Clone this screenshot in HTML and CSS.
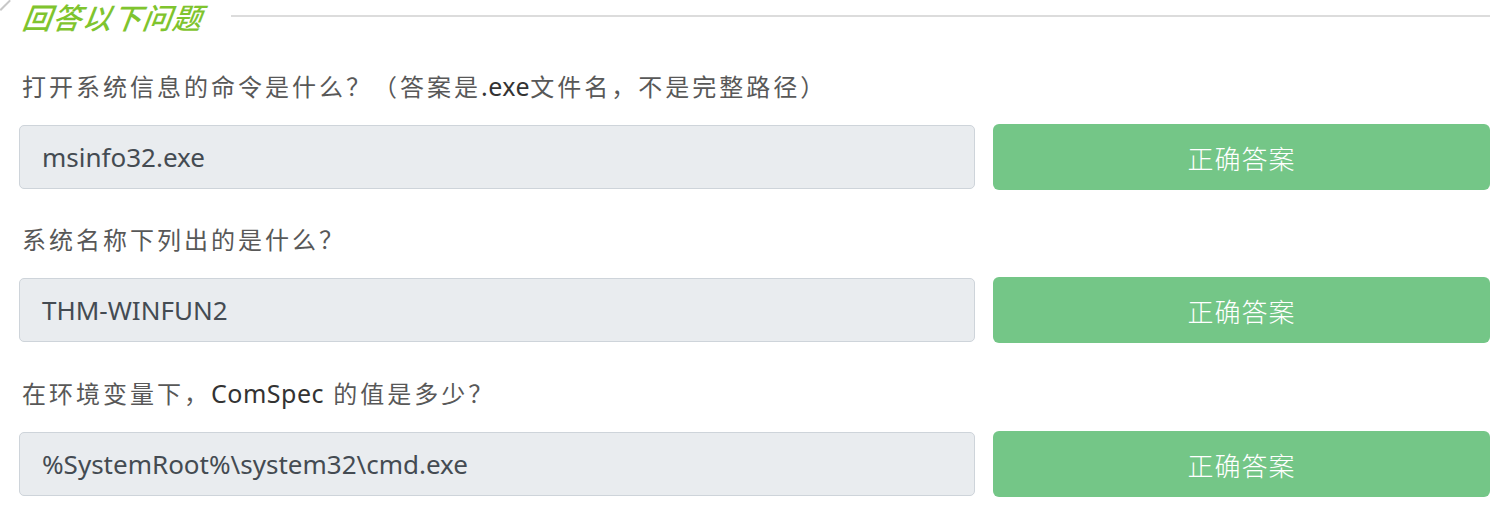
FILE: index.html
```html
<!DOCTYPE html>
<html lang="zh">
<head>
<meta charset="utf-8">
<link rel="stylesheet" href="styles.css">
</head>
<body>
<div class="page">
  <span class="corner"></span>
  <div class="title-row">
    <h2 class="title">回答以下问题</h2>
    <div class="rule"></div>
  </div>
  <div class="qa">
    <p class="question">打开系统信息的命令是什么？（答案是<span class="lat">.exe</span>文件名，不是完整路径）</p>
    <div class="answer-row">
      <div class="answer">msinfo32.exe</div>
      <button class="btn">正确答案</button>
    </div>
  </div>
  <div class="qa">
    <p class="question">系统名称下列出的是什么？</p>
    <div class="answer-row">
      <div class="answer">THM-WINFUN2</div>
      <button class="btn">正确答案</button>
    </div>
  </div>
  <div class="qa">
    <p class="question">在环境变量下，<span class="lat">ComSpec</span> 的值是多少？</p>
    <div class="answer-row">
      <div class="answer">%SystemRoot%\system32\cmd.exe</div>
      <button class="btn">正确答案</button>
    </div>
  </div>
</div>
</body>
</html>
```
FILE: styles.css
```css
* { box-sizing: border-box; }
html, body { margin: 0; padding: 0; background: #fff; }
body {
  font-family: "Noto Sans", "Noto Sans CJK SC", sans-serif;
  color: #555;
}
.page {
  position: relative;
  padding: 0 7px 0 19px;
  width: 1497px;
}
.corner {
  position: absolute;
  left: -6px;
  top: -6px;
  width: 14px;
  height: 14px;
  border-right: 2px solid #c8c8c8;
  transform: rotate(45deg);
}
.title-row {
  display: flex;
  align-items: center;
  height: 31px;
  padding-top: 1px;
  gap: 28px;
}
.title {
  margin: 0 0 0 4px;
  font-size: 29px;
  font-weight: 500;
  font-style: italic;
  color: #7fc42e;
  line-height: 30px;
  letter-spacing: 1px;
  font-family: "Noto Sans CJK SC", sans-serif;
  transform: skewX(-8deg);
  white-space: nowrap;
}
.rule {
  flex: 1;
  height: 2px;
  background: #dcdcdc;
}
.qa { margin-top: 37px; }
.qa + .qa { margin-top: 32px; }
.question {
  margin: 0 0 19px 3px;
  font-size: 24px;
  line-height: 36px;
  letter-spacing: 3px;
  color: #585858;
}
.lat { color: #333; letter-spacing: 0.5px; font-size: 25px; }
.answer-row {
  display: flex;
  align-items: center;
  gap: 18px;
}
.answer {
  width: 956px;
  height: 64px;
  display: flex;
  align-items: center;
  padding-left: 22px;
  background: #e9ecef;
  border: 1px solid #ced4da;
  border-radius: 5px;
  font-size: 26px;
  color: #444b52;
}
.btn {
  width: 497px;
  height: 66px;
  border: none;
  border-radius: 6px;
  background: #74c687;
  color: #fff;
  font-family: "Noto Sans CJK SC", sans-serif;
  font-size: 26px;
  letter-spacing: 1px;
  font-weight: 300;
  cursor: pointer;
}
```
